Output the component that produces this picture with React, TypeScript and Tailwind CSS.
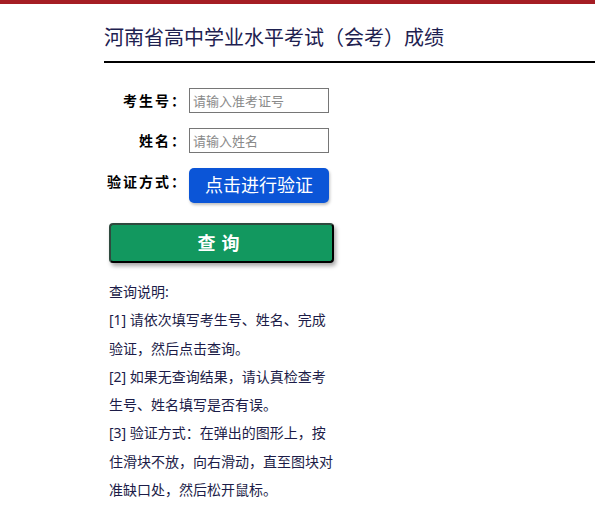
import React from "react";

const font = { fontFamily: '"Noto Sans", "Noto Sans CJK SC", sans-serif' };

const notes = [
  "查询说明:",
  "[1] 请依次填写考生号、姓名、完成验证，然后点击查询。",
  "[2] 如果无查询结果，请认真检查考生号、姓名填写是否有误。",
  "[3] 验证方式：在弹出的图形上，按住滑块不放，向右滑动，直至图块对准缺口处，然后松开鼠标。",
];

export default function App() {
  return (
    <div className="min-h-[508px] w-[595px] overflow-hidden bg-white" style={font}>
      <div className="h-[4px] bg-[#a51d24]" />
      <div className="ml-[104px]">
        <div className="w-[491px] border-b-2 border-black pt-[19px] pb-[8px] text-[20px] leading-[30px] text-[#1e2150]">
          河南省高中学业水平考试（会考）成绩
        </div>

        <div className="mt-[25px] flex flex-col gap-[15px]">
          <div className="flex items-center">
            <label className="w-[85px] shrink-0 whitespace-nowrap pr-[2px] text-right text-[14px] font-bold tracking-[2px] text-black">考生号：</label>
            <input
              type="text"
              placeholder="请输入准考证号"
              className="h-[25px] w-[140px] border border-[#767676] px-[3px] text-[13px] text-black placeholder:text-[#8a8a8a] focus:outline-none"
            />
          </div>
          <div className="flex items-center">
            <label className="w-[85px] shrink-0 whitespace-nowrap pr-[2px] text-right text-[14px] font-bold tracking-[2px] text-black">姓名：</label>
            <input
              type="text"
              placeholder="请输入姓名"
              className="h-[25px] w-[140px] border border-[#767676] px-[3px] text-[13px] text-black placeholder:text-[#8a8a8a] focus:outline-none"
            />
          </div>
          <div className="flex items-start">
            <label className="w-[85px] shrink-0 whitespace-nowrap pr-[2px] pt-[3px] text-right text-[14px] font-bold tracking-[2px] text-black">验证方式：</label>
            <button className="h-[35px] w-[140px] rounded-[5px] bg-[#0b55d7] text-[18px] text-white shadow-[1px_2px_3px_rgba(0,0,0,0.25)]">
              点击进行验证
            </button>
          </div>
        </div>

        <button className="ml-[5px] mt-[20px] h-[40px] w-[225px] rounded-[4px] border-2 border-[#2f4a3e] border-b-black border-r-black bg-[#12985f] text-[18px] font-bold tracking-[6px] text-white shadow-[2px_3px_4px_rgba(0,0,0,0.35)]">
          查询
        </button>

        <div className="ml-[5px] mt-[15px] w-[226px] text-[14px] leading-[28.3px] text-[#1c1c48]">
          {notes.map((n) => (
            <p key={n}>{n}</p>
          ))}
        </div>
      </div>
    </div>
  );
}
